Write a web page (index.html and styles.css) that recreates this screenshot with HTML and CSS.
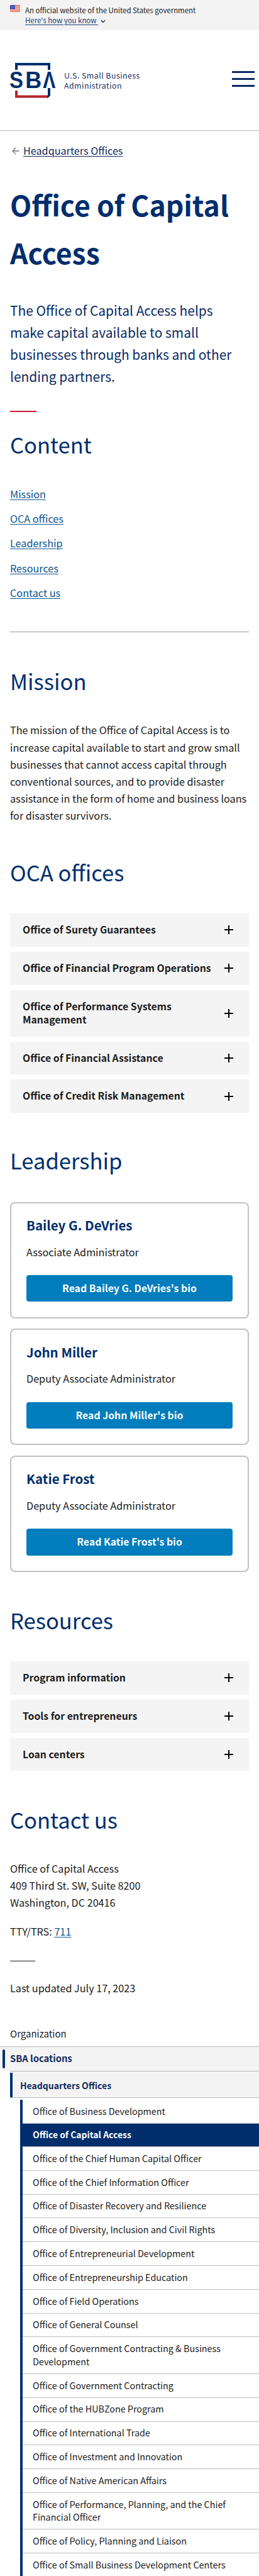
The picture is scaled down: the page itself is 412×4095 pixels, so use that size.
FILE: index.html
```html
<!DOCTYPE html>
<html lang="en">
<head>
<meta charset="utf-8">
<title>Office of Capital Access</title>
<meta name="viewport" content="width=device-width, initial-scale=1">
<link rel="stylesheet" href="styles.css">
</head>
<body>
<div class="banner">
  <svg class="flag" width="16" height="11" viewBox="0 0 16 11">
    <rect width="16" height="11" fill="#fff"/>
    <path d="M0 .5h16M0 2.5h16M0 4.5h16M0 6.5h16M0 8.5h16M0 10.5h16" stroke="#db3e1f" stroke-width="1"/>
    <rect width="8" height="6.5" fill="#1e33b1"/>
    <path d="M1 1.5h7M1 3.3h7M1 5.1h7" stroke="#fff" stroke-width=".8" stroke-dasharray=".9 1"/>
  </svg>
  <div class="banner-text">
    <p>An official website of the United States government</p>
    <p><a class="banner-link" href="#">Here's how you know&nbsp;</a><svg class="chevron" width="8" height="6" viewBox="0 0 8 6"><path d="M.8 1.2 4 4.4 7.2 1.2" fill="none" stroke="#1b1b1b" stroke-width="1.3"/></svg></p>
  </div>
</div>

<header class="header">
  <a class="logo" href="#">
    <svg class="logo-mark" width="78" height="56" viewBox="-3 0 78 56">
      <path d="M10 11V2h52v9" fill="none" stroke="#002e6d" stroke-width="4"/>
      <path d="M10 44v9.500h50" fill="none" stroke="#b5262f" stroke-width="4"/>
      <path d="M60 40h4v12l-3.500 3.500h-2l1.500-3z" fill="#002e6d"/>
      <text class="logo-letter" x="-1" y="40.400" textLength="22" lengthAdjust="spacingAndGlyphs">S</text>
      <text class="logo-letter" x="24.200" y="40.400" textLength="26" lengthAdjust="spacingAndGlyphs">B</text>
      <text class="logo-letter" x="52.200" y="40.400" textLength="20" lengthAdjust="spacingAndGlyphs">Λ</text>
    </svg>
    <span class="logo-name">U.S. Small Business<br>Administration</span>
  </a>
  <button class="menu" aria-label="Menu"><span></span><span></span><span></span></button>
</header>

<main class="main">
  <nav class="breadcrumb">
    <svg width="12" height="12" viewBox="0 0 12 12"><path d="M11.500 6H1.500M6 1 1.200 6 6 11" fill="none" stroke="#71767a" stroke-width="1.300"/></svg>
    <a href="#">Headquarters Offices</a>
  </nav>
  <h1>Office of Capital Access</h1>
  <p class="lead">The Office of Capital Access helps make capital available to small businesses through banks and other lending partners.</p>
  <div class="red-rule"></div>

  <h2 id="content">Content</h2>
  <ul class="toc">
    <li><a href="#mission">Mission</a></li>
    <li><a href="#offices">OCA offices</a></li>
    <li><a href="#leadership">Leadership</a></li>
    <li><a href="#resources">Resources</a></li>
    <li><a href="#contact">Contact us</a></li>
  </ul>
  <hr class="divider">

  <h2 id="mission">Mission</h2>
  <p class="mission">The mission of the Office of Capital Access is to increase capital available to start and grow small businesses that cannot access capital through conventional sources, and to provide disaster assistance in the form of home and business loans for disaster survivors.</p>

  <h2 id="offices">OCA offices</h2>
  <div class="accordion">
    <button class="acc-item"><span>Office of Surety Guarantees</span><i class="plus"></i></button>
    <button class="acc-item"><span>Office of Financial Program Operations</span><i class="plus"></i></button>
    <button class="acc-item"><span>Office of Performance Systems Management</span><i class="plus"></i></button>
    <button class="acc-item"><span>Office of Financial Assistance</span><i class="plus"></i></button>
    <button class="acc-item"><span>Office of Credit Risk Management</span><i class="plus"></i></button>
  </div>

  <h2 id="leadership">Leadership</h2>
  <div class="cards">
    <section class="card"><h3>Bailey G. DeVries</h3><p>Associate Administrator</p><a class="button" href="#">Read Bailey G. DeVries's bio</a></section>
    <section class="card"><h3>John Miller</h3><p>Deputy Associate Administrator</p><a class="button" href="#">Read John Miller's bio</a></section>
    <section class="card"><h3>Katie Frost</h3><p>Deputy Associate Administrator</p><a class="button" href="#">Read Katie Frost's bio</a></section>
  </div>

  <h2 id="resources">Resources</h2>
  <div class="accordion">
    <button class="acc-item"><span>Program information</span><i class="plus"></i></button>
    <button class="acc-item"><span>Tools for entrepreneurs</span><i class="plus"></i></button>
    <button class="acc-item"><span>Loan centers</span><i class="plus"></i></button>
  </div>

  <h2 id="contact">Contact us</h2>
  <p class="address">Office of Capital Access<br>409 Third St. SW, Suite 8200<br>Washington, DC 20416</p>
  <p class="tty">TTY/TRS: <a href="#">711</a></p>
  <div class="grey-rule"></div>
  <p class="updated">Last updated July 17, 2023</p>
</main>

<aside class="org">
  <p class="org-title">Organization</p>
  <a class="nav-one" href="#">SBA locations</a>
  <a class="nav-two" href="#">Headquarters Offices</a>
  <ul class="nav-list">
    <li>Office of Business Development</li>
    <li class="current">Office of Capital Access</li>
    <li>Office of the Chief Human Capital Officer</li>
    <li>Office of the Chief Information Officer</li>
    <li>Office of Disaster Recovery and Resilience</li>
    <li>Office of Diversity, Inclusion and Civil Rights</li>
    <li>Office of Entrepreneurial Development</li>
    <li>Office of Entrepreneurship Education</li>
    <li>Office of Field Operations</li>
    <li>Office of General Counsel</li>
    <li>Office of Government Contracting &amp; Business Development</li>
    <li>Office of Government Contracting</li>
    <li>Office of the HUBZone Program</li>
    <li>Office of International Trade</li>
    <li>Office of Investment and Innovation</li>
    <li>Office of Native American Affairs</li>
    <li>Office of Performance, Planning, and the Chief Financial Officer</li>
    <li>Office of Policy, Planning and Liaison</li>
    <li>Office of Small Business Development Centers</li>
  </ul>
</aside>
</body>
</html>
```

FILE: styles.css
```css
* { box-sizing: border-box; }
body, p, h1, h2, h3, ul { margin: 0; padding: 0; }
ul { list-style: none; }
body {
  background: #fff;
  color: #1b1b1b;
  font-family: "Noto Sans CJK SC", "Noto Sans", sans-serif;
  font-size: 16.2px;
  line-height: 27.1px;
  overflow-x: hidden;
}
button { border: 0; font: inherit; color: inherit; text-align: left; }
a { color: #0c5591; text-underline-offset: 2px; text-decoration-thickness: 1px; }

.banner {
  height: 48px;
  padding: 7.5px 16px 0;
  display: flex;
  gap: 8px;
  background: #f3f3f3;
  font-size: 11.45px;
  line-height: 16px;
}
.flag { flex: none; margin-top: .5px; }
.banner-link { color: #1a3f78; }
.chevron { margin-left: 4px; }

.header {
  height: 160px;
  padding: 0 7px 5px 16px;
  border-bottom: 1px solid #b4b4b4;
  display: flex;
  align-items: center;
  justify-content: space-between;
}
.logo { display: flex; align-items: center; gap: 11px; margin-top: 6px; text-decoration: none; }
.logo-mark { margin-left: -3px; }
.logo-letter { font: bold 36px "Liberation Sans", sans-serif; fill: #002e6d; }
.logo-name { color: #1a3266; font-size: 12.4px; line-height: 16.3px; letter-spacing: .45px; }
.menu { display: grid; gap: 8px; width: 36px; padding: 0; background: none; }
.menu span { height: 3px; background: #0b2a63; }

.main { padding: 18px 16px 0; }
.breadcrumb { display: flex; align-items: center; gap: 6px; padding-left: 3px; height: 27px; }
.breadcrumb a { color: #122a5e; }
h1 {
  margin-top: 33.5px;
  color: #002e6d;
  font-size: 44.5px;
  line-height: 76.8px;
}
.lead { margin-top: 35.6px; padding-right: 10px; color: #0b2a63; font-size: 20.95px; line-height: 35.1px; }
.red-rule { width: 42px; height: 2px; margin-top: 36.9px; background: #cc1a2b; }
h2 { color: #002e6d; font-size: 34.6px; font-weight: 400; line-height: 40px; }
#content { margin-top: 30.9px; }
.toc { margin-top: 45.9px; display: grid; gap: 12.2px; }
.divider { margin: 47.6px 0 0; border: 0; height: 1px; background: #9a9a9a; }
#mission { margin-top: 57px; }
.mission { margin-top: 45.9px; }
#offices { margin-top: 55.9px; }
#leadership { margin-top: 55.1px; }
#resources { margin-top: 56px; }
#contact { margin-top: 56.3px; }

.accordion { display: grid; gap: 8px; margin-top: 46px; }
.acc-item {
  display: flex;
  align-items: center;
  justify-content: space-between;
  min-height: 52.75px;
  padding: 16px 25px 16px 20px;
  background: #f4f4f4;
  font-size: 15.77px;
  font-weight: 700;
  line-height: 20.9px;
}
.plus {
  flex: none;
  width: 14px;
  height: 14px;
  background:
    linear-gradient(#000, #000) center / 14px 2px no-repeat,
    linear-gradient(#000, #000) center / 2px 14px no-repeat;
}

.cards { display: grid; gap: 16.6px; margin-top: 46.1px; }
.card { height: 185px; padding: 23.7px 24px 24px; border: 2px solid #c1c1c1; border-radius: 8px; }
h3 { color: #002e6d; font-size: 20.5px; line-height: 22px; }
.card p { margin-top: 18.4px; }
.button {
  display: block;
  margin-top: 23.4px;
  height: 42.4px;
  border-radius: 4px;
  background: #007dbc;
  color: #fff;
  font-size: 15.83px;
  font-weight: 700;
  line-height: 42.4px;
  text-align: center;
  text-decoration: none;
}

.address { margin-top: 45.5px; }
.tty { margin-top: 18.2px; }
.grey-rule { width: 40px; height: 3px; margin-top: 32px; background: #a9a9a9; }
.updated { margin-top: 28.2px; }

.org { margin-top: 48.8px; font-size: 14.35px; line-height: 20.8px; }
.org-title { padding-left: 16px; font-size: 15px; }
.nav-one, .nav-two {
  display: block;
  position: relative;
  border-top: 1px solid #b8b8b8;
  background: #f4f4f4;
  color: #122a5e;
  font-weight: 700;
  text-decoration: none;
}
.nav-one { margin-top: 9px; height: 39px; padding: 8px 16px; font-size: 14.75px; }
.nav-two { height: 43px; margin-left: 16px; padding: 12px 16px; border-bottom: 1px solid #b8b8b8; font-size: 14px; }
.nav-one::before, .nav-two::before { content: ""; position: absolute; width: 4px; background: #002e6d; border-radius: 2px; }
.nav-one::before { left: 4px; top: 4px; height: 30px; }
.nav-two::before { left: 0; top: 2px; height: 39px; border-radius: 0; }
.nav-list { margin: 3.6px 0 0 32px; border-left: 4px solid #002e6d; height: 757px; overflow: hidden; }
.nav-list li { padding: 7.7px 24px 8.3px 16px; border-bottom: 1px solid #bdbdbd; }
.nav-list .current { padding-top: 7px; background: #002e6d; color: #fff; font-size: 13.95px; font-weight: 700; }
```
